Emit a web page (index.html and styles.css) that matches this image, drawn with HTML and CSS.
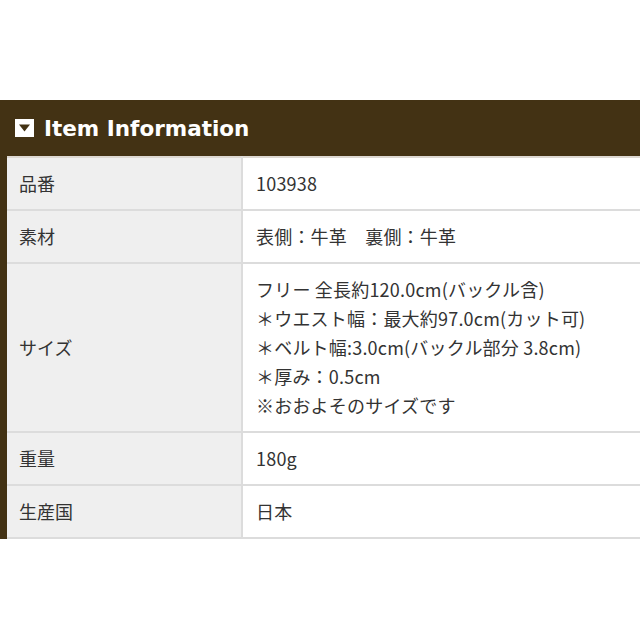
FILE: index.html
```html
<!DOCTYPE html>
<html lang="ja">
<head>
  <meta charset="UTF-8" />
  <title>Item Information</title>
  <link rel="stylesheet" href="styles.css">
</head>
<body>
  <section class="item-info">
    <h2 class="item-title">
      <span class="title-icon">
        <svg width="19" height="18" viewBox="0 0 19 18"><rect width="19" height="18" fill="#fff"/><polygon points="4,5.5 15,5.5 9.5,12.5" fill="#433214"/></svg>
      </span>
      Item Information
    </h2>
    <table class="spec-table">
      <tr>
        <th>品番</th>
        <td>103938</td>
      </tr>
      <tr>
        <th>素材</th>
        <td>表側：牛革　裏側：牛革</td>
      </tr>
      <tr>
        <th>サイズ</th>
        <td>フリー 全長約120.0cm(バックル含)<br>＊ウエスト幅：最大約97.0cm(カット可)<br>＊ベルト幅:3.0cm(バックル部分 3.8cm)<br>＊厚み：0.5cm<br>※おおよそのサイズです</td>
      </tr>
      <tr>
        <th>重量</th>
        <td>180g</td>
      </tr>
      <tr>
        <th>生産国</th>
        <td>日本</td>
      </tr>
    </table>
  </section>
</body>
</html>
```

FILE: styles.css
```css
body {
  margin: 0;
  background: #fff;
  overflow: hidden;
  font-family: "Noto Sans CJK JP", "Noto Sans", sans-serif;
  color: #333;
}

.item-info {
  margin-top: 100px;
  background: #433214;
  padding-left: 7px;
}

.item-title {
  margin: 0;
  height: 56px;
  display: flex;
  align-items: center;
  gap: 10px;
  padding-left: 8px;
  font-family: "DejaVu Sans", Verdana, sans-serif;
  font-size: 21.5px;
  font-weight: bold;
  color: #fff;
}

.title-icon {
  display: flex;
  width: 19px;
  height: 18px;
}

.spec-table {
  width: 100%;
  border-collapse: collapse;
  background: #fff;
  border-top: 2px solid #ddd8d2;
}

.spec-table th,
.spec-table td {
  font-size: 18px;
  line-height: 29px;
  padding: 11px 12px;
  text-align: left;
  vertical-align: middle;
  border-bottom: 2px solid #dcdcdc;
}

.spec-table th {
  width: 210px;
  font-weight: normal;
  background: #efefef;
  border-right: 2px solid #dcdcdc;
}

.spec-table td {
  padding-left: 13px;
  letter-spacing: 0.2px;
}
```
